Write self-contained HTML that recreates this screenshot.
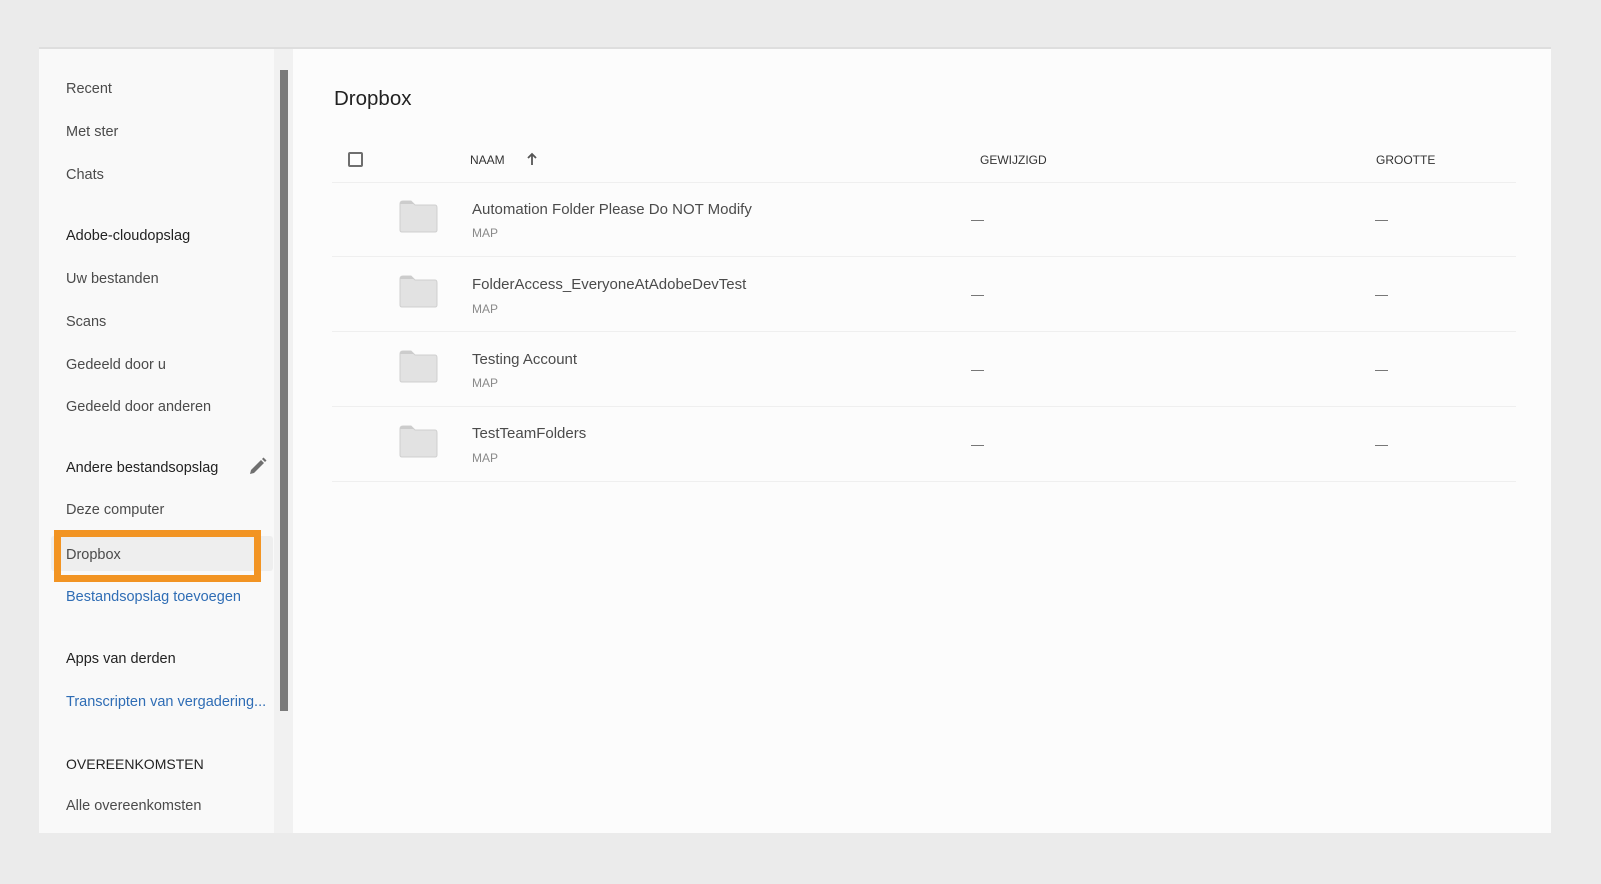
<!DOCTYPE html>
<html><head><meta charset="utf-8"><style>
*{margin:0;padding:0;box-sizing:border-box}
body{width:1601px;height:884px;background:#ebebeb;position:relative;overflow:hidden;font-family:"Liberation Sans",sans-serif;color:#4b4b4b}
.a{position:absolute;white-space:nowrap}
.s{font-size:14.5px;line-height:20px;height:20px;left:66px}
.h{color:#222}
.l{color:#2f6db5}
.rl{position:absolute;left:332px;width:1184px;height:1px;background:#efefef}
.nm{position:absolute;left:472px;font-size:15px;line-height:20px;color:#4b4b4b}
.mp{position:absolute;left:472px;font-size:12px;line-height:16px;color:#8a8a8a}
.ds{position:absolute;width:13px;height:1px;background:#777}
</style></head><body>
<div class="a" style="left:39px;top:47px;width:1512px;height:2px;background:#dedede"></div>
<div class="a" style="left:39px;top:49px;width:235px;height:784px;background:#f9f9f9"></div>
<div class="a" style="left:274px;top:49px;width:19px;height:784px;background:#f1f1f1"></div>
<div class="a" style="left:280px;top:70px;width:8px;height:641px;background:#7b7b7b"></div>
<div class="a" style="left:293px;top:49px;width:1258px;height:784px;background:#fcfcfc"></div>

<div class="a s" style="top:79px">Recent</div>
<div class="a s" style="top:122px">Met ster</div>
<div class="a s" style="top:165px">Chats</div>
<div class="a s h" style="top:226px">Adobe-cloudopslag</div>
<div class="a s" style="top:269px">Uw bestanden</div>
<div class="a s" style="top:312px">Scans</div>
<div class="a s" style="top:355px">Gedeeld door u</div>
<div class="a s" style="top:397px">Gedeeld door anderen</div>
<div class="a s h" style="top:458px">Andere bestandsopslag</div>
<svg class="a" style="left:248px;top:456px" width="20" height="20" viewBox="0 0 20 20"><path d="M2 18 L3 14 L13 4 L16 7 L6 17 Z" fill="#707070"/><path d="M14 3 L15.5 1.5 L18.5 4.5 L17 6 Z" fill="#707070"/></svg>
<div class="a s" style="top:500px">Deze computer</div>
<div class="a" style="left:51px;top:536px;width:222px;height:35px;background:#eeeeee;border-radius:3px"></div>
<div class="a" style="left:54px;top:530px;width:207px;height:52px;border:7px solid #f29423"></div>
<div class="a s" style="top:545px">Dropbox</div>
<div class="a s l" style="top:587px">Bestandsopslag toevoegen</div>
<div class="a s h" style="top:649px">Apps van derden</div>
<div class="a s l" style="top:692px">Transcripten van vergadering...</div>
<div class="a s h" style="top:754px;font-size:14px">OVEREENKOMSTEN</div>
<div class="a s" style="top:796px">Alle overeenkomsten</div>

<div class="a" style="left:334px;top:87px;font-size:20.5px;line-height:24px;color:#222">Dropbox</div>
<div class="a" style="left:348px;top:152px;width:15px;height:15px;border:2px solid #6e6e6e;border-radius:2px"></div>
<div class="a" style="left:470px;top:152px;font-size:12px;line-height:16px;color:#333">NAAM</div>
<svg class="a" style="left:526px;top:152px" width="12" height="14" viewBox="0 0 12 14"><path d="M6 13 V2 M2 6 L6 2 L10 6" stroke="#555" stroke-width="1.8" fill="none"/></svg>
<div class="a" style="left:980px;top:152px;font-size:12px;line-height:16px;color:#333">GEWIJZIGD</div>
<div class="a" style="left:1376px;top:152px;font-size:12px;line-height:16px;color:#333">GROOTTE</div>

<div class="rl" style="top:182px"></div>
<div class="rl" style="top:256px"></div>
<div class="rl" style="top:331px"></div>
<div class="rl" style="top:406px"></div>
<div class="rl" style="top:481px"></div>

<svg width="0" height="0" style="position:absolute"><defs><symbol id="f" viewBox="0 0 39 33"><path d="M1 4 Q1 1 4 1 H12 L16 5 H36 Q38 5 38 8 V30 Q38 32 36 32 H3 Q1 32 1 30 Z" fill="#e2e2e2" stroke="#cfcfcf" stroke-width="1"/><path d="M1 4 Q1 1 4 1 H12 L15 4 Z" fill="#cccccc"/></symbol></defs></svg>

<svg class="a" style="left:399px;top:200px" width="39" height="33"><use href="#f"/></svg>
<div class="nm" style="top:200px">Automation Folder Please Do NOT Modify</div>
<div class="mp" style="top:225px">MAP</div>
<div class="ds" style="left:971px;top:220px"></div><div class="ds" style="left:1375px;top:220px"></div>

<svg class="a" style="left:399px;top:275px" width="39" height="33"><use href="#f"/></svg>
<div class="nm" style="top:275px">FolderAccess_EveryoneAtAdobeDevTest</div>
<div class="mp" style="top:301px">MAP</div>
<div class="ds" style="left:971px;top:295px"></div><div class="ds" style="left:1375px;top:295px"></div>

<svg class="a" style="left:399px;top:350px" width="39" height="33"><use href="#f"/></svg>
<div class="nm" style="top:350px">Testing Account</div>
<div class="mp" style="top:375px">MAP</div>
<div class="ds" style="left:971px;top:370px"></div><div class="ds" style="left:1375px;top:370px"></div>

<svg class="a" style="left:399px;top:425px" width="39" height="33"><use href="#f"/></svg>
<div class="nm" style="top:424px">TestTeamFolders</div>
<div class="mp" style="top:450px">MAP</div>
<div class="ds" style="left:971px;top:445px"></div><div class="ds" style="left:1375px;top:445px"></div>
</body></html>
